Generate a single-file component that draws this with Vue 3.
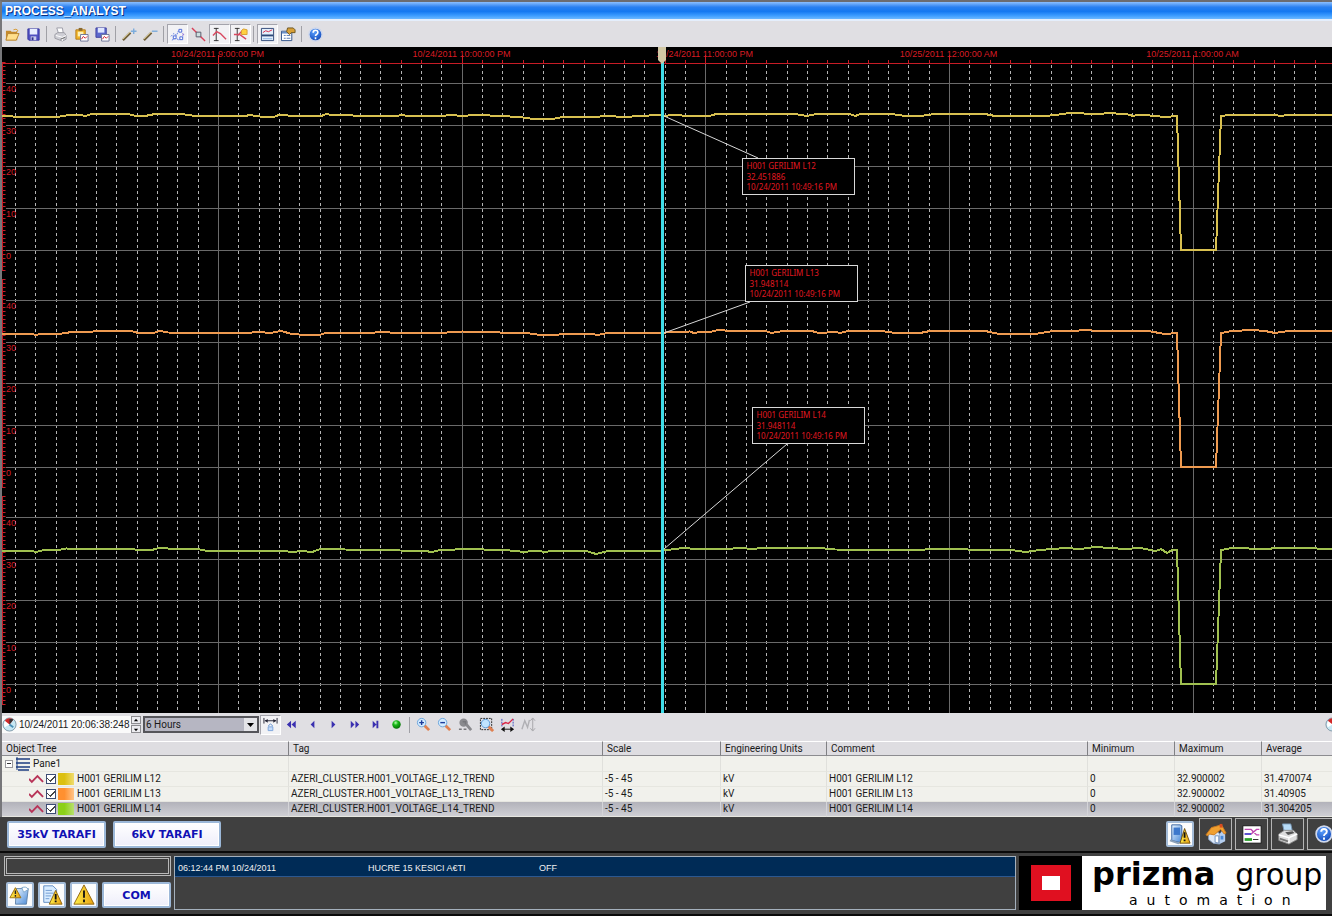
<template>
  <div class="station">
    <svg class="sprite" aria-hidden="true">
      <defs>
        <linearGradient id="g-blue" x1="0" y1="0" x2="1" y2="1">
          <stop offset="0" stop-color="#e8f4ff" />
          <stop offset="1" stop-color="#4a8ad8" />
        </linearGradient>
        <radialGradient id="g-help" cx="0.4" cy="0.3" r="0.8">
          <stop offset="0" stop-color="#5aa0ff" />
          <stop offset="1" stop-color="#0a3fb0" />
        </radialGradient>
        <radialGradient id="g-green" cx="0.4" cy="0.3" r="0.7">
          <stop offset="0" stop-color="#b8ffb0" />
          <stop offset="0.4" stop-color="#18b818" />
          <stop offset="1" stop-color="#067006" />
        </radialGradient>
        <linearGradient id="g-warn" x1="0" y1="0" x2="1" y2="0">
          <stop offset="0" stop-color="#fff04a" />
          <stop offset="1" stop-color="#e8a010" />
        </linearGradient>
      </defs>
      <symbol id="i-open" viewBox="0 0 16 16">
        <path d="M1 4h5l1 1h6v9H1z" fill="#c48a2c" />
        <path d="M3 7h12l-3 7H1z" fill="#ffdf8c" stroke="#b88430" />
        <path d="M9 3q3-2 5 1l-2 1" fill="none" stroke="#d89a30" />
      </symbol>
      <symbol id="i-save" viewBox="0 0 16 16">
        <path d="M2 2h12v12H3l-1-1z" fill="#5050c0" stroke="#3434a0" />
        <path d="M4 2h8v6H4z" fill="#e8eeff" />
        <path d="M5 10h6v4H5z" fill="#c8ccec" />
        <path d="M6 11h2v3H6z" fill="#30308c" />
      </symbol>
      <symbol id="i-print" viewBox="0 0 16 16">
        <path d="M4 1h6l1 6H6z" fill="#fff" stroke="#9a9aa6" />
        <path d="M2 8l3-2h7l2 3v4l-4 2-8-3z" fill="#cfcfd6" stroke="#9c9ca4" />
        <path d="M3 9l7 2 4-2M10 11v4" fill="none" stroke="#fff" />
        <path d="M8 13l5-2" stroke="#666" />
      </symbol>
      <symbol id="i-copy" viewBox="0 0 16 16">
        <path d="M2 3h10v10H2z" fill="#f0b428" stroke="#b47c1c" />
        <path d="M5 1h4v3H5z" fill="#8a6a30" />
        <path d="M4 5h6v5H4z" fill="#fff2b8" />
        <path d="M7 8h8v7H7z" fill="#fff" stroke="#6c7498" />
        <path d="M8 13l2-3 2 2 2-2" fill="none" stroke="#d02030" />
      </symbol>
      <symbol id="i-export" viewBox="0 0 16 16">
        <path d="M1 1h11v10H1z" fill="#5c68cc" stroke="#4040a0" />
        <path d="M3 1h7v5H3z" fill="#dfe6ff" />
        <path d="M7 8h8v7H7z" fill="#fff" stroke="#6c7498" />
        <path d="M8 13l2-3 2 2 2-2" fill="none" stroke="#d02030" />
      </symbol>
      <symbol id="i-pen-add" viewBox="0 0 16 16">
        <path d="M1 14l8-8" stroke="#6c5c38" stroke-width="2.500" />
        <path d="M1 13l8-8" stroke="#e4d49c" />
        <path d="M9.500 4.500h6M12.500 1.500v6" stroke="#7cacdc" stroke-width="1.500" />
      </symbol>
      <symbol id="i-pen-remove" viewBox="0 0 16 16">
        <path d="M1 14l8-8" stroke="#6c5c38" stroke-width="2.500" />
        <path d="M1 13l8-8" stroke="#e4d49c" />
        <path d="M9.500 4.500h6" stroke="#7cacdc" stroke-width="1.500" />
      </symbol>
      <symbol id="i-sync" viewBox="0 0 16 16">
        <path d="M1 10l3-3 3 2 2-5M2 14l4-2 4 2 4-4" fill="none" stroke="#5878e0" stroke-dasharray="2 1" />
        <path d="M9.500 2.500h3v3h-3zM3.500 9.500h3v3h-3zM10.500 10.500h3v3h-3z" fill="#fff" stroke="#4464d8" />
        <path d="M13 7l2 1-2 1" stroke="#8c70d8" fill="none" />
      </symbol>
      <symbol id="i-point" viewBox="0 0 16 16">
        <path d="M1 1l14 14" stroke="#d84058" stroke-width="1.500" />
        <path d="M5.500 5.500h5v5h-5z" fill="#cde0e0" stroke="#556" />
      </symbol>
      <symbol id="i-cursor" viewBox="0 0 16 16">
        <path d="M2 1.500h5M2 14.500h5M4.500 1v14" stroke="#333" fill="none" />
        <path d="M1 9l4-4 4 2 6 6" stroke="#d84860" stroke-width="1.500" fill="none" />
      </symbol>
      <symbol id="i-cursor-label" viewBox="0 0 16 16">
        <path d="M2 1.500h5M2 14.500h5M4.500 1v14" stroke="#333" fill="none" />
        <path d="M1 8h6l7 5M5 9l6-6" stroke="#d84860" stroke-width="1.500" fill="none" />
        <path d="M9 4l2-2 4 1v5H9z" fill="#ffd040" stroke="#d8a030" />
      </symbol>
      <symbol id="i-view" viewBox="0 0 16 16">
        <path d="M1.500 1.500h13v13h-13z" fill="#e4f0fc" stroke="#2e4878" />
        <path d="M2 8h12v2H2z" fill="#2e4878" />
        <path d="M3 6l3-2 3 1 4-2" stroke="#d82848" fill="none" />
        <path d="M3 12h10v1H3z" fill="#88b0e0" />
      </symbol>
      <symbol id="i-props" viewBox="0 0 16 16">
        <path d="M.5 4.500h11v10H.5z" fill="#fff" stroke="#2e5088" />
        <path d="M1 5h10v2H1z" fill="#6c90c8" />
        <path d="M3 9h2M3 12h2M6 9h4M6 12h4" stroke="#5878b0" />
        <path d="M7 1h6l2 2v3h-4l-2 2-3-3z" fill="#d8a038" stroke="#6c5420" />
      </symbol>
      <symbol id="i-help" viewBox="0 0 16 16">
        <circle cx="8" cy="8" r="7" fill="url(#g-help)" stroke="#cfd8ec" stroke-width="1.500" />
        <path d="M5.500 6q0-2.500 2.500-2.500t2.500 2.300q0 1.400-1.500 2.200-1 .6-1 1.700M8 11v2" stroke="#fff" stroke-width="1.700" fill="none" />
      </symbol>
      <symbol id="i-clock" viewBox="0 0 16 16">
        <circle cx="8" cy="8" r="7" fill="#c8e8f4" stroke="#8098a8" />
        <path d="M8 8V2a6 6 0 0 0-5 9z" fill="#fff" />
        <path d="M8 8L3 4a6 6 0 0 1 9-1z" fill="#d02828" />
        <path d="M8 8V2h3l1 1z" fill="#333" />
        <path d="M8 8l4 3" stroke="#4a90b8" stroke-width="2" />
      </symbol>
      <symbol id="i-span" viewBox="0 0 16 16">
        <path d="M1 1v6M15 1v6M2 4h12" stroke="#223" stroke-width="1" fill="none" />
        <path d="M2 4l3-2v4zM14 4l-3-2v4z" fill="#223" />
        <path d="M6 10v-1q2-3 4 0v1" stroke="#6090d0" fill="none" />
        <path d="M5.500 10.500h5v4h-5z" fill="#c4dcfc" stroke="#7ca4dc" />
      </symbol>
      <symbol id="i-rewind" viewBox="0 0 16 16"><path d="M7.500 4v8L3 8zM12.500 4v8L8 8z" fill="#3a30b0" /></symbol>
      <symbol id="i-back" viewBox="0 0 16 16"><path d="M10 4v8L6 8z" fill="#3a30b0" /></symbol>
      <symbol id="i-next" viewBox="0 0 16 16"><path d="M6 4v8l4-4z" fill="#3a30b0" /></symbol>
      <symbol id="i-forward" viewBox="0 0 16 16"><path d="M4 4v8l4-4zM9 4v8l4-4z" fill="#3a30b0" /></symbol>
      <symbol id="i-end" viewBox="0 0 16 16"><path d="M5 4v8l4-4zM9 4h2v8H9z" fill="#3a30b0" /></symbol>
      <symbol id="i-live" viewBox="0 0 16 16"><circle cx="8" cy="8" r="4.500" fill="url(#g-green)" /></symbol>
      <symbol id="i-zoom-in" viewBox="0 0 16 16">
        <path d="M9 9l5 5" stroke="#e08050" stroke-width="3" />
        <circle cx="6" cy="6" r="4.500" fill="#d4ecff" stroke="#6aa4dc" />
        <path d="M3.500 6h5M6 3.500v5" stroke="#1c3c9c" stroke-width="1.500" />
      </symbol>
      <symbol id="i-zoom-out" viewBox="0 0 16 16">
        <path d="M9 9l5 5" stroke="#e08050" stroke-width="3" />
        <circle cx="6" cy="6" r="4.500" fill="#d4ecff" stroke="#6aa4dc" />
        <path d="M3.500 6h5" stroke="#1c3c9c" stroke-width="1.500" />
      </symbol>
      <symbol id="i-zoom-undo" viewBox="0 0 16 16">
        <path d="M9 8l5 6" stroke="#8a8a8e" stroke-width="3" />
        <circle cx="6" cy="6" r="4.500" fill="#8a8a8e" />
        <path d="M1 13h3M6 13h3M5 5h3v3" stroke="#77777b" stroke-width="1.500" fill="none" />
      </symbol>
      <symbol id="i-zoom-box" viewBox="0 0 16 16">
        <path d="M1.500 1.500h12v12h-12z" fill="none" stroke="#222" stroke-dasharray="2 1" />
        <path d="M9 9l6 6" stroke="#e08050" stroke-width="3" />
        <circle cx="7" cy="7" r="4.500" fill="#c0e4ff" stroke="#5a9ad8" />
      </symbol>
      <symbol id="i-fit" viewBox="0 0 16 16">
        <path d="M2 2v8M14 2v8" stroke="#3848c0" stroke-dasharray="2 1" />
        <path d="M2 8l4-2 3 1 5-5" stroke="#d82848" stroke-width="1.500" fill="none" />
        <path d="M2 13h12" stroke="#111" />
        <path d="M1 13l4-3v6zM15 13l-4-3v6z" fill="#111" />
      </symbol>
      <symbol id="i-autoscale" viewBox="0 0 16 16">
        <path d="M1 13l3-9 3 7 2-8" stroke="#b0b0b4" stroke-width="1.500" fill="none" />
        <path d="M12.500 2v12M10 4l2.500-3L15 4M10 12l2.500 3 2.500-3" stroke="#a4a4a8" fill="none" />
      </symbol>
      <symbol id="i-trend" viewBox="0 0 16 10">
        <path d="M0 5l3 3 6-6 6 6" stroke="#b83458" stroke-width="2" fill="none" />
      </symbol>
      <symbol id="i-alarm-bin" viewBox="0 0 24 24">
        <path d="M8 5h13l-2 17H7z" fill="url(#g-blue)" stroke="#5c80a8" />
        <path d="M14 4q5-2 7 2l-5 3z" fill="#fff" stroke="#7fa8cc" />
        <path d="M7 4l6 11H1z" fill="url(#g-warn)" stroke="#9a6c08" />
        <path d="M7 7v4M7 12v2" stroke="#222" stroke-width="1.500" />
      </symbol>
      <symbol id="i-alarm-list" viewBox="0 0 24 24">
        <path d="M3 2h10l4 4v14H3z" fill="#d8ecff" stroke="#5c88c0" />
        <path d="M5 7h7M5 10h9M5 13h6M5 16h4" stroke="#6c98d0" />
        <path d="M16 7l7 15H9z" fill="url(#g-warn)" stroke="#8c6008" />
        <path d="M16 11v6M16 18v2" stroke="#111" stroke-width="2" />
      </symbol>
      <symbol id="i-alarm" viewBox="0 0 24 24">
        <path d="M12 1l11 21H1z" fill="url(#g-warn)" stroke="#8c6008" />
        <path d="M12 7v8M12 17v3" stroke="#111" stroke-width="2" />
      </symbol>
      <symbol id="i-station" viewBox="0 0 24 24">
        <path d="M3 2h9l2 1v16l-3 2-8-2z" fill="url(#g-blue)" stroke="#35609c" />
        <path d="M5 5h7v8H5z" fill="#3c78cc" />
        <path d="M1 19l9 3 5-2" stroke="#8aa0b8" stroke-width="2" fill="none" />
        <path d="M17 6l6 16H12z" fill="url(#g-warn)" stroke="#6c4c08" />
        <path d="M17 10v6M17 18v2" stroke="#111" stroke-width="2" />
      </symbol>
      <symbol id="i-home" viewBox="0 0 24 24">
        <path d="M4 11l6-5 6 6v11l-7-1-5-4z" fill="#dce8f8" stroke="#8aa4c8" />
        <path d="M16 12l3-4 3 4v8l-6 3z" fill="#b4cdee" />
        <path d="M1 13L7 5l11-3 5 9-2 1-4-5-7 6-5-1-2 2z" fill="#f0a030" stroke="#c87820" />
        <path d="M16 1h3v4h-3z" fill="#d84c20" />
        <path d="M11 14h4v8l-4-1z" fill="#fff" stroke="#6c8cb8" />
        <path d="M17 14h3v4h-3z" fill="#4888d8" />
      </symbol>
      <symbol id="i-chart" viewBox="0 0 24 24">
        <path d="M2 3h20v19H2z" fill="#fff" stroke="#111" stroke-width="1" />
        <path d="M4 7h7l6 6h3M4 12h7l6-5h3" fill="none" stroke="#c048b0" stroke-width="1.500" />
        <path d="M4 12h7" stroke="#5050d0" stroke-width="2" />
        <path d="M4 18h8" stroke="#28a028" stroke-width="3" />
        <path d="M13 18h6" stroke="#222" stroke-width="1" />
      </symbol>
      <symbol id="i-printer" viewBox="0 0 24 24">
        <path d="M6 1h9l2 9H8z" fill="#b8dcf8" stroke="#7898b8" />
        <path d="M2 12l6-4h10l4 4v6l-9 5-11-4z" fill="#dcdcdc" stroke="#888" />
        <path d="M2 13l11 3 9-4M13 16v6" stroke="#fff" stroke-width="1.500" fill="none" />
        <path d="M9 10l8-1 2 2-7 2z" fill="#555" />
        <path d="M3 17l9 3" stroke="#777" stroke-width="2" />
      </symbol>
    </svg>

    <div class="window">
      <header class="titlebar">
        <h1>PROCESS_ANALYST</h1>
      </header>

      <div class="toolbar" role="toolbar" aria-label="Main">
        <template v-for="(item, i) in mainTools" :key="i">
          <span v-if="item === '|'" class="sep"></span>
          <button v-else type="button" class="tool" :class="{ pressed: item.on }" :aria-label="item.label">
            <svg><use :href="'#i-' + item.icon" /></svg>
          </button>
        </template>
      </div>

      <svg class="chart" viewBox="2 47 1330 666">
        <rect x="2" y="47" width="1330" height="666" fill="#000" />
        <g class="grid">
          <line v-for="x in minorLines" :key="'m' + x" class="minor" :x1="x" :x2="x" y1="65" y2="713" />
          <line v-for="h in hours" :key="'h' + h.x" :x1="h.x" :x2="h.x" y1="64" y2="713" />
          <template v-for="p in panes" :key="p.zero">
            <line v-for="n in 5" :key="n" x1="6" x2="1332" :y1="yOf(p, (n - 1) * 10)" :y2="yOf(p, (n - 1) * 10)" />
          </template>
        </g>

        <g class="axis">
          <line x1="2" x2="1332" y1="63.500" y2="63.500" />
          <line v-for="x in minorLines" :key="'t' + x" :x1="x" :x2="x" y1="60" y2="64" />
          <line v-for="h in hours" :key="'t' + h.x" :x1="h.x" :x2="h.x" y1="55" y2="64" />
          <text v-for="h in hours" :key="h.text" :x="h.x - 1" y="57" text-anchor="middle">{{ h.text }}</text>
          <template v-for="p in panes" :key="p.zero">
            <line x1="2.500" x2="2.500" :y1="p.zero - 188" :y2="p.zero + 21" />
            <line class="ruler" x1="4" x2="4" :y1="p.zero - 188" :y2="p.zero + 21" />
            <text v-for="n in 5" :key="n" x="6" :y="yOf(p, (n - 1) * 10) + 8">{{ (n - 1) * 10 }}</text>
          </template>
        </g>

        <polyline v-for="p in panes" :key="p.color" class="trace" :points="p.points" :stroke="p.color" />

        <rect x="661" y="60" width="3" height="653" fill="#3fdce8" />
        <path d="M658 47h8v13l-4 4-4-4z" fill="#d2c8a4" />

        <g v-for="c in callouts" :key="c.name" class="callout">
          <line x1="664" :y1="c.from" :x2="c.toX" :y2="c.toY" />
          <rect :x="c.x" :y="c.y" width="112" height="36" />
          <text :x="c.x + 4" :y="c.y + 10">{{ c.name }}</text>
          <text :x="c.x + 4" :y="c.y + 21">{{ c.value }}</text>
          <text :x="c.x + 4" :y="c.y + 31">10/24/2011 10:49:16 PM</text>
        </g>
      </svg>

      <div class="timebar" role="toolbar" aria-label="Time">
        <label class="when">
          <svg><use href="#i-clock" /></svg>
          <input v-model="startTime" type="text" aria-label="Start time" />
        </label>
        <span class="spinner">
          <button type="button" aria-label="Later"><svg viewBox="0 0 9 6"><path d="M2 4h5L4.500 1z" /></svg></button>
          <button type="button" aria-label="Earlier"><svg viewBox="0 0 9 6"><path d="M2 2h5L4.500 5z" /></svg></button>
        </span>
        <span class="span-picker">
          <select v-model="span" aria-label="Time span">
            <option>1 Hours</option>
            <option>6 Hours</option>
            <option>12 Hours</option>
          </select>
          <svg viewBox="0 0 13 13"><path d="M3 5h7L6.500 9z" /></svg>
        </span>
        <template v-for="(item, i) in timeTools" :key="i">
          <span v-if="item === '|'" class="sep"></span>
          <button v-else type="button" class="tool" :class="{ pressed: item.on }" :aria-label="item.label" :disabled="item.off">
            <svg><use :href="'#i-' + item.icon" /></svg>
          </button>
        </template>
        <svg class="end-clock"><use href="#i-clock" /></svg>
      </div>

      <table class="objects">
        <colgroup>
          <col class="c-tree" />
          <col class="c-tag" />
          <col class="c-scale" />
          <col class="c-units" />
          <col />
          <col class="c-num" />
          <col class="c-num" />
          <col class="c-avg" />
        </colgroup>
        <thead>
          <tr>
            <th v-for="h in headings" :key="h" scope="col">{{ h }}</th>
          </tr>
        </thead>
        <tbody>
          <tr class="pane-row">
            <td>
              <div class="pane-name">
                <button type="button" class="expander" aria-label="Collapse Pane1"></button>
                <svg class="pane-icon" viewBox="0 0 14 14"><path d="M0 2h14M0 6h14M0 10h14M2 13h11" stroke="#1c3c80" stroke-width="1.500" /><path d="M1 0v13" stroke="#1c3c80" /></svg>
                Pane1
              </div>
            </td>
            <td v-for="n in 7" :key="n"></td>
          </tr>
          <tr v-for="row in rows" :key="row.name" :class="{ selected: row.selected }">
            <td>
              <label class="pen">
                <svg class="pen-icon"><use href="#i-trend" /></svg>
                <input v-model="row.shown" type="checkbox" />
                <span class="swatch" :class="row.swatch"></span>
                {{ row.name }}
              </label>
            </td>
            <td>AZERI_CLUSTER.H001_VOLTAGE_{{ row.id }}_TREND</td>
            <td>-5 - 45</td>
            <td>kV</td>
            <td>{{ row.name }}</td>
            <td>0</td>
            <td>32.900002</td>
            <td>{{ row.average }}</td>
          </tr>
        </tbody>
      </table>
    </div>

    <nav class="pages">
      <button type="button" class="page-btn first">35kV TARAFI</button>
      <button type="button" class="page-btn second">6kV TARAFI</button>
      <div class="shortcuts">
        <button type="button" class="icon-btn" aria-label="Station alarms"><svg><use href="#i-station" /></svg></button>
        <button v-for="s in shortcuts" :key="s" type="button" class="flat-btn" :aria-label="s">
          <svg><use :href="'#i-' + s" /></svg>
        </button>
      </div>
    </nav>

    <footer class="footer">
      <div class="status">
        <div class="field"></div>
        <div class="status-buttons">
          <button v-for="a in alarmButtons" :key="a" type="button" class="icon-btn" :aria-label="a">
            <svg><use :href="'#i-' + a" /></svg>
          </button>
          <button type="button" class="page-btn com">COM</button>
        </div>
      </div>
      <div class="alarms">
        <div class="alarm">
          <span class="a-time">06:12:44 PM 10/24/2011</span>
          <span class="a-text">HUCRE 15 KESICI A€TI</span>
          <span>OFF</span>
        </div>
      </div>
      <div class="logo">
        <div class="mark"><span></span></div>
        <div class="brand">
          <div class="brand-name"><b>prizma</b> <span>group</span></div>
          <div class="brand-sub">automation</div>
        </div>
      </div>
    </footer>
  </div>
</template>

<script setup>
import { ref } from "vue";

const startTime = ref("10/24/2011 20:06:38:248");
const span = ref("6 Hours");

const mainTools = [
  { icon: "open", label: "Open" },
  { icon: "save", label: "Save" },
  "|",
  { icon: "print", label: "Print" },
  { icon: "copy", label: "Copy to clipboard" },
  { icon: "export", label: "Export" },
  "|",
  { icon: "pen-add", label: "Add pen" },
  { icon: "pen-remove", label: "Remove pen" },
  "|",
  { icon: "sync", label: "Lock pens", on: true },
  { icon: "point", label: "Points" },
  { icon: "cursor", label: "Cursor", on: true },
  { icon: "cursor-label", label: "Cursor labels", on: true },
  "|",
  { icon: "view", label: "Object view", on: true },
  { icon: "props", label: "Properties" },
  "|",
  { icon: "help", label: "Help" },
];

const timeTools = [
  { icon: "span", label: "Lock span", on: true },
  { icon: "rewind", label: "Back one span" },
  { icon: "back", label: "Back" },
  { icon: "next", label: "Forward" },
  { icon: "forward", label: "Forward one span" },
  { icon: "end", label: "Now" },
  { icon: "live", label: "Auto scroll" },
  "|",
  { icon: "zoom-in", label: "Zoom in" },
  { icon: "zoom-out", label: "Zoom out" },
  { icon: "zoom-undo", label: "Undo zoom", off: true },
  { icon: "zoom-box", label: "Box zoom" },
  { icon: "fit", label: "Fit span" },
  { icon: "autoscale", label: "Auto scale", off: true },
];

// time axis: each hour is split in twelve
const firstHour = 218.5;
const hourWidth = 243.7;

const hours = [
  "10/24/2011 9:00:00 PM",
  "10/24/2011 10:00:00 PM",
  "10/24/2011 11:00:00 PM",
  "10/25/2011 12:00:00 AM",
  "10/25/2011 1:00:00 AM",
].map((text, i) => ({ text, x: Math.floor(firstHour + i * hourWidth) + 0.5 }));

const minorLines = [];
for (let i = -10; i < 55; i++) {
  if (i % 12 === 0) continue;
  minorLines.push(Math.floor(firstHour + (i * hourWidth) / 12) + 0.5);
}

const panes = [
  {
    zero: 250,
    color: "#d8c050",
    points:
      "2,115.5 13,116.5 60,116.5 66,115.5 78,114.5 85,116 92,114 128,114 134,115.5 145,116 155,114 185,114.5 195,116 245,116 250,115 260,116.5 275,116.5 280,114.5 292,116 320,116.5 326,114 335,115.5 345,115 360,116 395,116 403,115 410,116.5 440,116 452,115 462,116 475,115 490,115.5 520,117 530,118.5 555,118.5 565,116.5 600,116.5 612,116 620,117 645,116 658,114.5 663,116 678,114.5 684,116 708,116.5 716,114 765,114 795,114 807,116 814,114.5 850,114 855,116 862,113.5 895,114.5 905,116 920,116 935,114 985,114 995,116 1040,116.5 1055,115 1070,113 1098,114 1110,113 1128,114.5 1133,116 1140,114.5 1165,117 1177,116 1181,250 1216,250 1221,116 1232,114.5 1275,114.5 1280,116 1293,114.5 1320,114.5 1332,115.5",
  },
  {
    zero: 467,
    color: "#ee9a50",
    points:
      "2,333.5 30,333.5 36,335 42,333.5 62,333.5 75,331.5 88,332.5 98,330.5 130,330.5 138,333 155,332.5 160,331 168,332.5 195,333 248,333.5 256,331.5 270,333 281,331 290,333.5 303,335 320,335 325,333 370,333 380,332 400,333 440,333 462,331.5 500,332.5 530,333.5 540,335 556,335 565,333.5 590,333.5 597,335 605,333.5 645,333 663,333.5 668,332 690,331.5 694,333 702,331.5 708,332.5 718,330 740,331.5 766,331 771,333 780,331.5 812,331 820,333.5 834,331.5 840,333 848,331 885,331.5 895,333 920,333 930,331 985,331 997,333.5 1038,333.5 1050,331.5 1075,331 1084,330 1100,331 1148,331 1165,334 1177,333 1181,467 1216,467 1221,333 1232,331 1253,330 1265,331 1275,333 1288,331 1332,331",
  },
  {
    zero: 684,
    color: "#a0c050",
    points:
      "2,550.5 30,550.5 36,552 42,550.5 58,550 66,548.5 100,549 135,549.5 140,550.5 152,550 160,547.5 172,549 198,549 205,550.5 280,550.5 292,552 302,551 312,552 322,548.5 345,549.5 400,550.5 425,551 432,552 440,550 470,549 510,550.5 525,552 535,550.5 545,552 555,550.5 585,550.5 596,554 610,550.5 663,550.5 675,549 686,547.5 692,549 730,549 740,547.5 750,549 765,548 820,548 835,549.5 900,550 950,549 985,550 1015,550.5 1025,552 1040,550 1065,548 1080,549 1095,547 1125,549 1140,548 1156,551 1161,549 1167,553 1173,549.5 1177,550 1181,684 1216,684 1221,550 1232,548 1265,549 1285,547.5 1332,549",
  },
];

const yOf = (pane, value) => Math.round(pane.zero - value * 4.18) + 0.5;

const callouts = [
  { name: "H001 GERILIM L12", value: "32.451886", x: 742.5, y: 158.5, from: 116, toX: 758, toY: 158 },
  { name: "H001 GERILIM L13", value: "31.948114", x: 745.5, y: 265.5, from: 333, toX: 750, toY: 302 },
  { name: "H001 GERILIM L14", value: "31.948114", x: 752.5, y: 407.5, from: 549, toX: 787, toY: 444 },
];

const headings = ["Object Tree", "Tag", "Scale", "Engineering Units", "Comment", "Minimum", "Maximum", "Average"];

const rows = ref([
  { id: "L12", name: "H001 GERILIM L12", swatch: "yellow", average: "31.470074", shown: true },
  { id: "L13", name: "H001 GERILIM L13", swatch: "orange", average: "31.40905", shown: true },
  { id: "L14", name: "H001 GERILIM L14", swatch: "green", average: "31.304205", shown: true, selected: true },
]);

const shortcuts = ["home", "chart", "printer", "help"];
const alarmButtons = ["alarm-bin", "alarm-list", "alarm"];
</script>

<style>
body {
  margin: 0;
  background: #404040;
  overflow-x: hidden;
}
</style>

<style scoped>
.station {
  overflow: hidden;
  background: #404040;
  font-family: Roboto, "Liberation Sans", Arial, sans-serif;
  font-size: 10px;
  color: #1a1a1a;
}

.station *,
.station {
  box-sizing: border-box;
}

.sprite {
  position: absolute;
  width: 0;
  height: 0;
}

button {
  padding: 0;
  border: 0;
  background: none;
  font: inherit;
}

svg {
  display: block;
}

.window {
  border-top: 2px solid #6c6c70;
  border-left: 2px solid #77777a;
}

.titlebar {
  height: 19px;
  padding-left: 3px;
  border-bottom: 2px solid #e4eefc;
  background: linear-gradient(#8cc0ff 0%, #2a80f0 30%, #1478f0 55%, #3c9cff 80%, #6cb8ff 100%);
}

.titlebar h1 {
  margin: 0;
  font: bold 12px/18px "Liberation Sans", Arial, sans-serif;
  color: #fff;
  text-shadow: 1px 1px 0 #0a2c80;
}

.toolbar,
.timebar {
  display: flex;
  align-items: center;
  background: #e0dfe3;
}

.toolbar {
  height: 26px;
}

.tool {
  display: flex;
  flex: none;
  align-items: center;
  justify-content: center;
  width: 21px;
  height: 20px;
  border: 1px solid transparent;
}

.tool svg {
  width: 15px;
  height: 15px;
}

.tool.pressed {
  background: #f2f2f5;
  border-color: #a4a4ac #fff #fff #a4a4ac;
}

.sep {
  flex: none;
  width: 1px;
  height: 16px;
  margin: 0 3px 0 2px;
  background: #a0a0a6;
}

.chart {
  width: 100%;
  height: auto;
}

.grid line {
  stroke: #6a6a6a;
  stroke-width: 1;
}

.grid .minor {
  stroke: #b4b4b4;
  stroke-dasharray: 3 3;
}

.axis line {
  stroke: #c81c26;
  stroke-width: 1;
}

.axis .ruler {
  stroke-width: 3;
  stroke-dasharray: 1 3;
}

.axis text {
  fill: #d81c24;
  font: 9px "Liberation Sans", Arial, sans-serif;
}

.trace {
  fill: none;
  stroke-width: 2;
  shape-rendering: crispEdges;
}

.callout line {
  stroke: #d8d8d8;
}

.callout rect {
  fill: #000;
  stroke: #d8d8d8;
}

.callout text {
  fill: #e01820;
  font: 8px "Noto Sans", "Open Sans", sans-serif;
}

.timebar {
  height: 28px;
  padding-bottom: 5px;
}

.when {
  display: flex;
  align-items: center;
  height: 17px;
  background: #fafafa;
}

.when svg {
  width: 15px;
  height: 15px;
}

.when input {
  width: 114px;
  height: 17px;
  padding: 0 0 0 2px;
  border: 0;
  background: none;
  font: 10px "Liberation Sans", Arial, sans-serif;
  color: inherit;
}

.spinner {
  display: flex;
  flex-direction: column;
  gap: 1px;
  width: 10px;
}

.spinner button {
  height: 8px;
  border: 1px solid #8c8c90;
  background: #ececf0;
}

.spinner svg {
  width: 8px;
  height: 5px;
}

.span-picker {
  position: relative;
  margin: 0 1px 0 2px;
}

.span-picker select {
  display: block;
  width: 116px;
  height: 17px;
  padding: 0 1px;
  border: 2px solid #55555a;
  border-radius: 0;
  appearance: none;
  background: #b6b6c2;
  font: inherit;
  color: inherit;
}

.span-picker svg {
  position: absolute;
  top: 2px;
  right: 2px;
  width: 13px;
  height: 13px;
  background: #e4e4e8;
  pointer-events: none;
}

.end-clock {
  flex: none;
  width: 15px;
  height: 15px;
  margin-left: auto;
  margin-right: -8px;
}

.objects {
  width: 100%;
  table-layout: fixed;
  border-spacing: 0;
  background: #f1f1ec;
}

.c-tree {
  width: 286px;
}

.c-tag {
  width: 314px;
}

.c-scale {
  width: 118px;
}

.c-units {
  width: 106px;
}

.c-num {
  width: 87px;
}

.c-avg {
  width: 71px;
}

.objects th {
  height: 15px;
  padding: 0 4px;
  border-top: 1px solid #fff;
  border-left: 1px solid #808084;
  border-bottom: 1px solid #8c8c90;
  background: #dedde1;
  font-weight: normal;
  line-height: 13px;
  text-align: left;
  white-space: nowrap;
}

.objects th:first-child {
  border-left: 0;
}

.objects td {
  height: 15px;
  padding: 0 2px;
  border-left: 1px solid #e0e0dc;
  border-bottom: 1px solid #e6e6e0;
  line-height: 14px;
  white-space: nowrap;
}

.objects td:first-child {
  padding: 0;
  border-left: 0;
}

.objects .pane-row td {
  height: 16px;
}

.objects .selected td {
  border-left-color: #d4d4d8;
  background: linear-gradient(#b2b2ba, #cfcfd4);
}

.objects .selected td:first-child {
  border-left: 0;
}

.pane-name,
.pen {
  display: flex;
  align-items: center;
}

.pane-name {
  gap: 3px;
  padding-left: 3px;
}

.expander {
  width: 8px;
  height: 8px;
  border: 1px solid #98989c;
  background: linear-gradient(#333, #333) center / 4px 1px no-repeat #fff;
}

.pane-icon {
  width: 14px;
  height: 14px;
}

.pen {
  gap: 2px;
  padding-left: 27px;
}

.pen-icon {
  width: 15px;
  height: 10px;
}

.pen input {
  width: 10px;
  height: 10px;
  margin: 0;
  border: 1px solid #3c4c74;
  appearance: none;
  background: #fff;
}

.pen input:checked {
  background:
    linear-gradient(45deg, transparent 44%, #444 44%, #444 58%, transparent 58%) 0 3px / 4px 4px no-repeat,
    linear-gradient(-45deg, transparent 42%, #444 42%, #444 60%, transparent 60%) 3px 1px / 6px 6px no-repeat,
    #fff;
}

.swatch {
  width: 16px;
  height: 12px;
  margin-right: 1px;
}

.swatch.yellow {
  background: linear-gradient(90deg, #dcc010 40%, #f0dc70);
}

.swatch.orange {
  background: linear-gradient(90deg, #ff9030 40%, #ffc488);
}

.swatch.green {
  background: linear-gradient(90deg, #8cd018 40%, #b8e070);
}

.pages {
  display: flex;
  align-items: center;
  gap: 7px;
  height: 36px;
  padding-left: 7px;
  border-bottom: 2px solid #0a0a0a;
}

.page-btn {
  height: 27px;
  border: 2px solid #9cb8d8;
  border-radius: 2px;
  background: linear-gradient(#fff, #eeeefa);
  box-shadow: inset 0 0 0 1px #fff;
  font: bold 11px "DejaVu Sans", Verdana, sans-serif;
  color: #1010b4;
}

.first {
  width: 99px;
}

.second {
  width: 108px;
}

.shortcuts {
  display: flex;
  align-items: center;
  gap: 3px;
  margin-left: auto;
  margin-right: -8px;
}

.icon-btn {
  display: flex;
  align-items: center;
  justify-content: center;
  width: 28px;
  height: 26px;
  border: 2px solid #a4bcd8;
  border-radius: 2px;
  background: #fdfdfd;
}

.icon-btn svg {
  width: 22px;
  height: 22px;
}

.shortcuts .icon-btn {
  margin-right: 2px;
}

.flat-btn {
  display: flex;
  align-items: center;
  justify-content: center;
  width: 33px;
  height: 32px;
  border: 1px solid #b4b4b4;
}

.flat-btn svg {
  width: 22px;
  height: 22px;
}

.flat-btn:last-child svg {
  width: 18px;
  height: 18px;
}

.footer {
  display: flex;
  gap: 3px;
  height: 63px;
  padding: 3px 6px 4px 4px;
  border-bottom: 2px solid #0a0a0a;
}

.status {
  flex: none;
  width: 167px;
}

.field {
  height: 20px;
  border: 3px double #b8b8b8;
}

.status-buttons {
  display: flex;
  gap: 4px;
  padding: 6px 0 0 2px;
}

.com {
  flex: 1;
  height: 26px;
}

.alarms {
  flex: 1;
  min-width: 0;
  border: 1px solid #a4b0bc;
}

.alarm {
  display: flex;
  height: 20px;
  padding-left: 3px;
  border-bottom: 1px solid #2c5890;
  background: #002b56;
  font: 9px/22px "Liberation Sans", Arial, sans-serif;
  color: #f0f0f0;
}

.a-time {
  width: 190px;
}

.a-text {
  width: 171px;
}

.logo {
  display: flex;
  flex: none;
}

.mark {
  display: flex;
  align-items: center;
  justify-content: center;
  width: 63px;
  background: #000;
}

.mark span {
  width: 40px;
  height: 36px;
  border: 11px solid #e01020;
  background: #fff;
}

.brand {
  width: 244px;
  overflow: hidden;
  background: #fff;
  color: #000;
}

.brand-name {
  display: flex;
  align-items: baseline;
  gap: 20px;
  padding-left: 10px;
  font: 30px/36px "DejaVu Sans", Verdana, sans-serif;
  white-space: nowrap;
}

.brand-name b {
  font-size: 32px;
}

.brand-sub {
  padding-left: 47px;
  font: 14px/14px "DejaVu Sans", Verdana, sans-serif;
  letter-spacing: 9px;
}
</style>
